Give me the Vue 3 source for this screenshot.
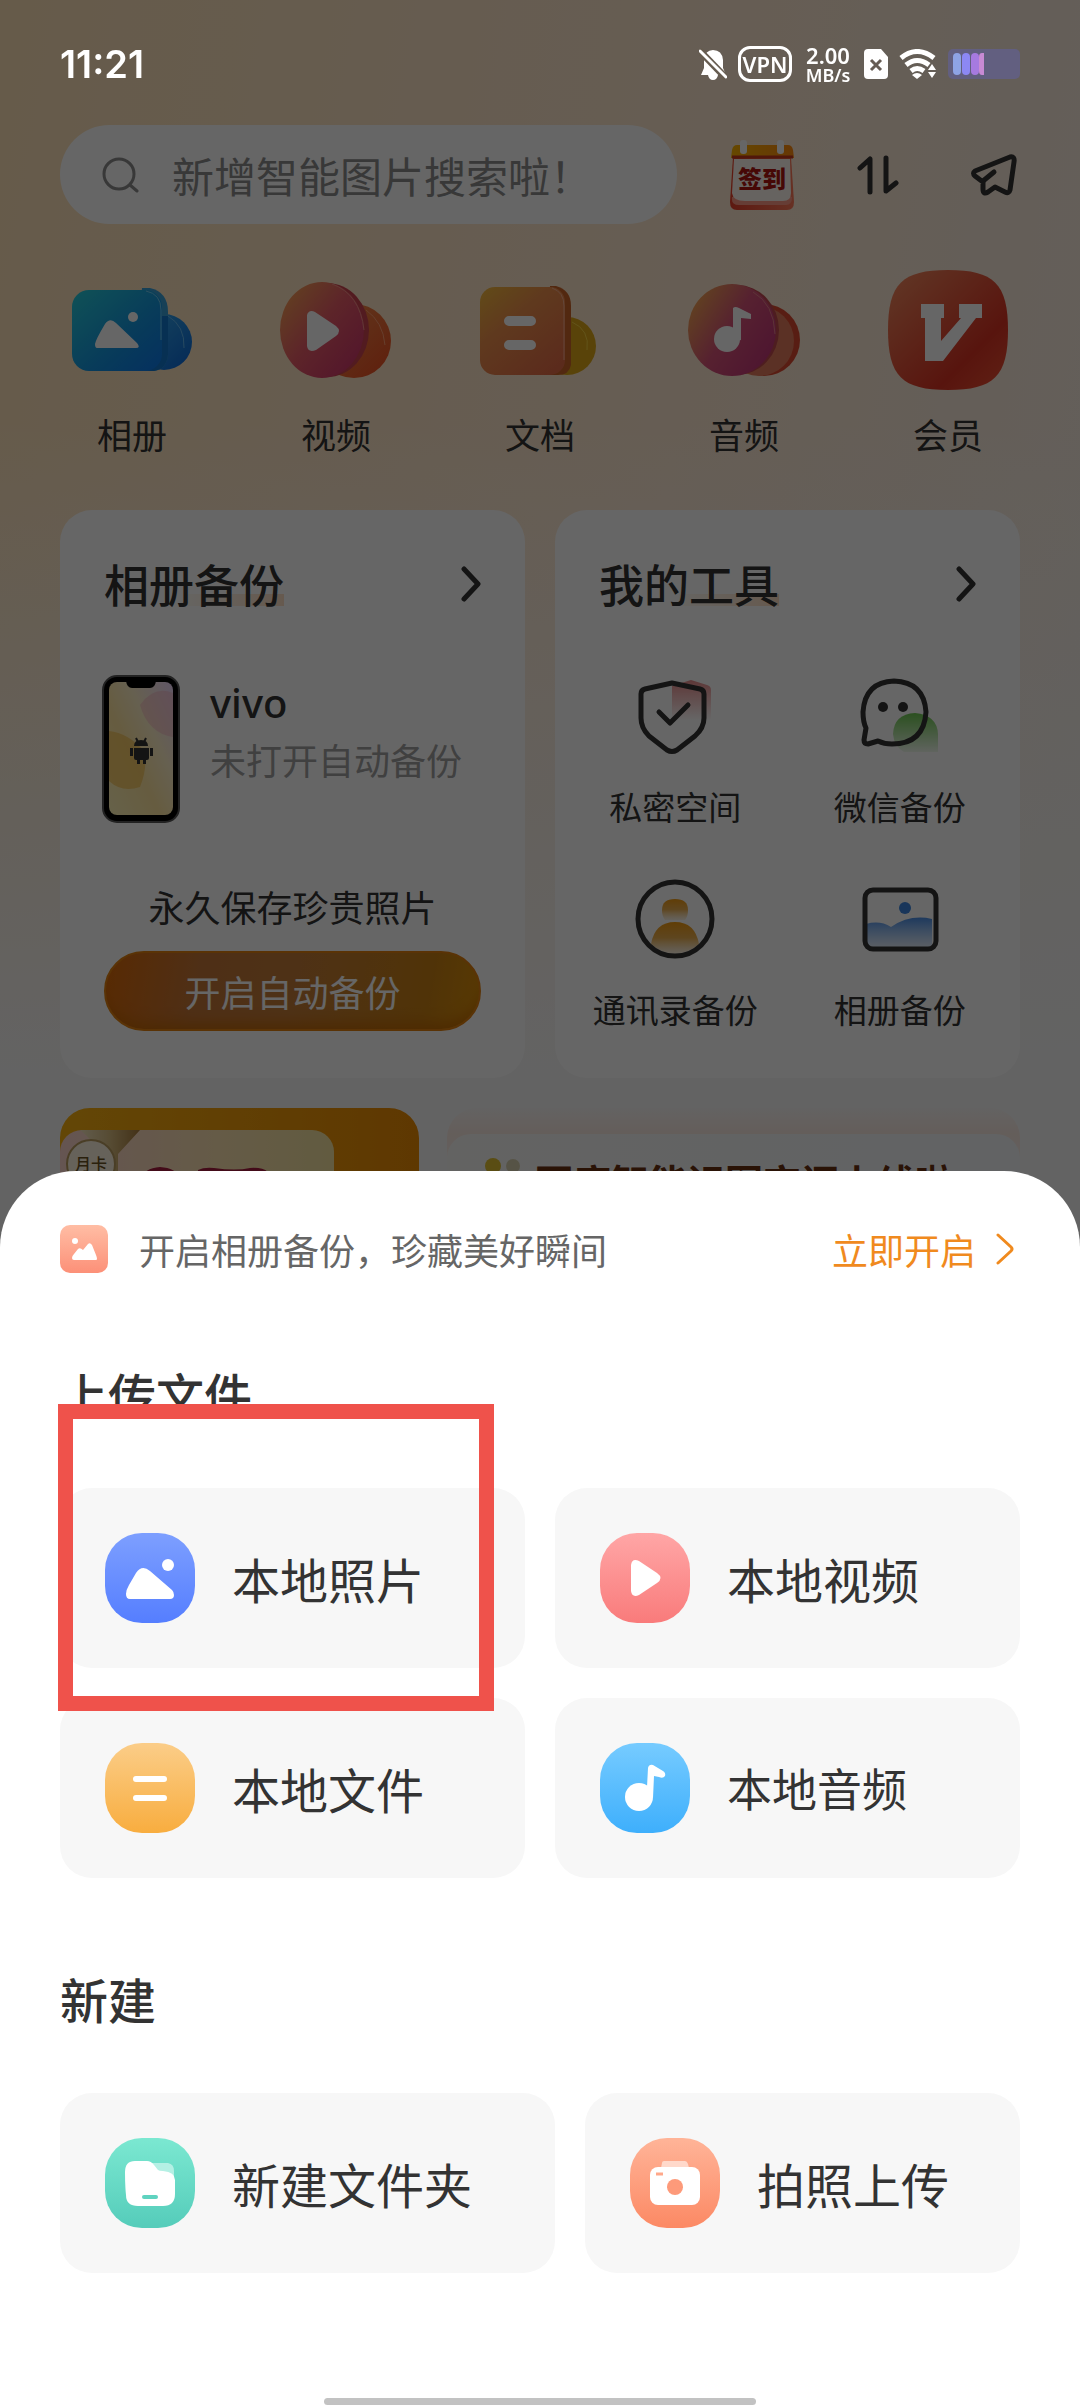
<script setup>
import { ref } from 'vue'

const keyword = ref('')

const categories = [
  { icon: 'album', label: '相册' },
  { icon: 'video', label: '视频' },
  { icon: 'doc', label: '文档' },
  { icon: 'audio', label: '音频' },
  { icon: 'vip', label: '会员' },
]

const tools = [
  { icon: 'shield', label: '私密空间' },
  { icon: 'chat', label: '微信备份' },
  { icon: 'contact', label: '通讯录备份' },
  { icon: 'picture', label: '相册备份' },
]

const uploads = [
  { icon: 'photo', label: '本地照片', from: '#7d9fff', to: '#557eff', marked: true },
  { icon: 'play', label: '本地视频', from: '#ffa6a6', to: '#f97b7b' },
  { icon: 'file', label: '本地文件', from: '#fbcd88', to: '#f8ad3f' },
  { icon: 'note', label: '本地音频', from: '#76cbff', to: '#3eaffc', compact: true },
]

const creations = [
  { icon: 'folder', label: '新建文件夹', from: '#7be8d1', to: '#55ccba' },
  { icon: 'camera', label: '拍照上传', from: '#ffb498', to: '#fc8964' },
]
</script>

<template>
  <div class="screen">
    <main class="home">
      <div class="topbar">
        <label class="search">
          <svg width="38" height="36" viewBox="0 0 38 36" fill="none" stroke="#8c8c8c" stroke-width="3" stroke-linecap="round">
            <circle cx="17" cy="17" r="15" />
            <path d="M28 28 L35 34" />
          </svg>
          <input v-model="keyword" type="text" aria-label="搜索" placeholder="新增智能图片搜索啦！" />
        </label>
        <div class="actions">
          <button type="button" class="action checkin">
            <svg width="66" height="72" viewBox="0 0 66 72" aria-hidden="true">
              <defs>
                <linearGradient id="calTop" x1="0" x2="1"><stop offset="0" stop-color="#ffb400" /><stop offset="1" stop-color="#ff8a10" /></linearGradient>
                <linearGradient id="calBody" x1="0" x2="1"><stop offset="0" stop-color="#e8402a" /><stop offset="1" stop-color="#ff7a5a" /></linearGradient>
              </defs>
              <path d="M4 18 H62 L65 63 Q65 71 58 71 H8 Q1 71 1 63 Z" fill="url(#calBody)" />
              <path d="M3 58 Q2 66 10 66 H57 Q63 66 63 58 Z" fill="#ff9a86" />
              <path d="M5 20 H61 L62 54 Q62 62 54 62 H16 Q4 62 3 54 Z" fill="#fff8f0" />
              <path d="M8 6 H59 Q63 6 64 11 L65 19 H2 L3 11 Q4 6 8 6 Z" fill="url(#calTop)" />
              <path d="M3 18 H64" stroke="#c83a1c" stroke-width="3" />
              <rect x="11" y="1" width="7" height="14" rx="3" fill="#fff" />
              <rect x="48" y="1" width="7" height="14" rx="3" fill="#fff" />
            </svg>
            <span class="checkin-text">签到</span>
          </button>
          <button type="button" class="action" aria-label="传输列表">
            <svg width="42" height="40" viewBox="0 0 42 40" fill="none" stroke="#333" stroke-width="5" stroke-linecap="round" stroke-linejoin="round">
              <path d="M3 13 L13 4 V37" />
              <path d="M29 3 V36 L39 28" />
            </svg>
          </button>
          <button type="button" class="action" aria-label="分享">
            <svg width="46" height="42" viewBox="0 0 46 42" fill="none" stroke="#333" stroke-width="5" stroke-linecap="round" stroke-linejoin="round">
              <path d="M4 17 L39 3 Q44 2 43 8 L39 36 Q38 40 34 38 L24 33 L17 38 Q12 41 12 35 V28 L4 22 Q1 19 4 17 Z" />
              <path d="M12 27 L23 18" />
            </svg>
          </button>
        </div>
      </div>

      <nav class="categories">
        <a v-for="c in categories" :key="c.icon" href="#" class="category">
          <svg v-if="c.icon === 'album'" width="120" height="120" viewBox="0 0 120 120">
            <defs>
              <linearGradient id="alb" x1="0" y1="0" x2="1" y2="1"><stop offset="0" stop-color="#28ccd8" /><stop offset="0.6" stop-color="#1494e0" /><stop offset="1" stop-color="#0c78ee" /></linearGradient>
              <linearGradient id="alb2" x1="0" y1="0" x2="1" y2="1"><stop offset="0" stop-color="#3bb0ec" /><stop offset="1" stop-color="#0a66d8" /></linearGradient>
            </defs>
            <circle cx="92" cy="72" r="28" fill="url(#alb2)" />
            <path d="M96 46 Q113 56 112 78" fill="none" stroke="#62b8f0" stroke-width="1" />
            <path d="M70 18 H78 Q96 22 96 42 V84 Q95 99 82 101 H64 Z" fill="#3aa0d8" />
            <path d="M90 46 H96 V84 Q95 99 82 101 H70 Z" fill="#1278d0" />
            <rect x="0" y="20" width="90" height="81" rx="17" fill="url(#alb)" />
            <path d="M74 21 Q89 24 89 40 V70" fill="none" stroke="#70c8f0" stroke-width="1" />
            <path d="M23 74 Q24 69 33 54 Q38 47 44 53 L65 73 Q69 78 64 78 H25 Q23 78 23 74 Z" fill="#fff" />
            <circle cx="61" cy="47" r="5" fill="#fff" />
          </svg>
          <svg v-else-if="c.icon === 'video'" width="120" height="120" viewBox="0 0 120 120">
            <defs>
              <linearGradient id="vid" x1="0" y1="0.1" x2="0.9" y2="0.9"><stop offset="0" stop-color="#f8a452" /><stop offset="0.5" stop-color="#e85c68" /><stop offset="1" stop-color="#d0386c" /></linearGradient>
              <linearGradient id="vid2" x1="0" y1="0" x2="1" y2="1"><stop offset="0" stop-color="#f09450" /><stop offset="1" stop-color="#ee4c20" /></linearGradient>
            </defs>
            <circle cx="78" cy="71" r="37" fill="url(#vid2)" />
            <path d="M90 40 Q107 52 109 75" fill="none" stroke="#ff9c70" stroke-width="1" />
            <ellipse cx="51" cy="60" rx="42" ry="47" fill="#cc4450" />
            <ellipse cx="46" cy="60" rx="42" ry="48" fill="url(#vid)" />
            <path d="M56 14 Q84 24 88 60" fill="none" stroke="#f58c84" stroke-width="1" />
            <path d="M31 45 Q33 39 39 42 L60 56 Q66 61 60 66 L40 80 Q32 83 31 76 Z" fill="#fff" />
          </svg>
          <svg v-else-if="c.icon === 'doc'" width="120" height="120" viewBox="0 0 120 120">
            <defs>
              <linearGradient id="doc" x1="0" y1="0" x2="0.8" y2="1"><stop offset="0" stop-color="#f5bc3c" /><stop offset="0.4" stop-color="#ee904c" /><stop offset="1" stop-color="#e46c48" /></linearGradient>
            </defs>
            <circle cx="87" cy="76" r="29" fill="#dea818" />
            <path d="M92 52 Q110 60 107 80" fill="none" stroke="#f5d040" stroke-width="1" />
            <path d="M70 16 H76 Q91 20 91 36 V95 Q89 105 78 105 H66 Z" fill="#cc6428" />
            <rect x="0" y="17" width="85" height="88" rx="15" fill="url(#doc)" />
            <path d="M72 18 Q84 22 84 36 V90" fill="none" stroke="#f8b090" stroke-width="1" />
            <path d="M29 51 H51 M29 75 H51" stroke="#fff" stroke-width="10" stroke-linecap="round" />
          </svg>
          <svg v-else-if="c.icon === 'audio'" width="120" height="120" viewBox="0 0 120 120">
            <defs>
              <linearGradient id="aud" x1="0" y1="0.2" x2="0.9" y2="0.8"><stop offset="0" stop-color="#f5a850" /><stop offset="0.5" stop-color="#d85478" /><stop offset="1" stop-color="#c43878" /></linearGradient>
            </defs>
            <circle cx="80" cy="70" r="36" fill="#dc4a30" />
            <circle cx="75" cy="71" r="35" fill="#e47c5c" />
            <ellipse cx="53" cy="60" rx="42" ry="45" fill="#c24a50" />
            <ellipse cx="48" cy="60" rx="44" ry="46" fill="url(#aud)" />
            <path d="M69 22 Q90 34 91 64" fill="none" stroke="#e88088" stroke-width="1" />
            <circle cx="43" cy="69" r="13" fill="#fff" />
            <path d="M49 72 V38 Q51 36 55 38 L67 44 V49 L57 48 V70 Z" fill="#fff" />
          </svg>
          <svg v-else width="120" height="120" viewBox="0 0 120 120">
            <defs>
              <linearGradient id="vip" x1="0" y1="0" x2="1" y2="1"><stop offset="0.1" stop-color="#f08058" /><stop offset="0.7" stop-color="#dc3424" /><stop offset="1" stop-color="#f05434" /></linearGradient>
            </defs>
            <path d="M60 0 C106 0 120 14 120 60 C120 106 106 120 60 120 C14 120 0 106 0 60 C0 14 14 0 60 0 Z" fill="url(#vip)" />
            <path d="M33 34 H56 V48 H53 V71 L73 48 H71 V34 H94 V48 H88 L55 91 H37 V48 H33 Z" fill="#fff" />
          </svg>
          <span>{{ c.label }}</span>
        </a>
      </nav>

      <div class="cards">
        <section class="card backup">
          <a href="#" class="card-head">
            <h2>相册备份</h2>
            <svg width="20" height="36" viewBox="0 0 20 36" fill="none" stroke="#333" stroke-width="5" stroke-linecap="round" stroke-linejoin="round"><path d="M3 3 L17 18 L3 33" /></svg>
          </a>
          <div class="device">
            <svg width="78" height="148" viewBox="0 0 78 148">
              <defs>
                <linearGradient id="wall" x1="1" y1="0" x2="0" y2="1"><stop offset="0" stop-color="#f0d8ff" /><stop offset="0.35" stop-color="#fff0c8" /><stop offset="0.6" stop-color="#ffe6a0" /><stop offset="1" stop-color="#fff4b8" /></linearGradient>
              </defs>
              <rect x="1" y="1" width="76" height="146" rx="14" fill="#000" stroke="#555" stroke-width="2" />
              <rect x="7" y="7" width="64" height="133" rx="8" fill="url(#wall)" />
              <path d="M7 56 Q26 58 42 76 Q46 92 38 112 Q20 118 7 106 Z" fill="#f3bd4c" opacity="0.65" />
              <path d="M38 30 Q52 10 71 18 V62 Q46 58 38 30 Z" fill="#f4b4c0" opacity="0.5" />
              <path d="M24 6 H54 Q53 13 48 13 H30 Q25 13 24 6 Z" fill="#000" />
              <path d="M34 63 L36 67 M44 63 L42 67" stroke="#333" stroke-width="2" />
              <path d="M32 71 Q32 65 39 65 Q46 65 46 71 Z M32 73 H47 V83 Q47 85 45 85 H34 Q32 85 32 83 Z M28 73 H31 V81 H28 Z M48 73 H51 V81 H48 Z M35 84 H38 V89 H35 Z M41 84 H44 V89 H41 Z" fill="#333" />
            </svg>
            <div class="device-info">
              <p class="device-name">vivo</p>
              <p class="device-state">未打开自动备份</p>
            </div>
          </div>
          <p class="slogan">永久保存珍贵照片</p>
          <button type="button" class="enable">开启自动备份</button>
        </section>

        <section class="card toolbox">
          <a href="#" class="card-head">
            <h2>我的工具</h2>
            <svg width="20" height="36" viewBox="0 0 20 36" fill="none" stroke="#333" stroke-width="5" stroke-linecap="round" stroke-linejoin="round"><path d="M3 3 L17 18 L3 33" /></svg>
          </a>
          <div class="tools">
            <a v-for="t in tools" :key="t.icon" href="#" class="tool">
              <svg v-if="t.icon === 'shield'" width="80" height="80" viewBox="0 0 80 80" fill="none" stroke="#333" stroke-width="5" stroke-linecap="round" stroke-linejoin="round">
                <defs><linearGradient id="shd" x1="0" y1="0" x2="0" y2="1"><stop offset="0" stop-color="#e88c8c" /><stop offset="1" stop-color="#f08c8c" stop-opacity="0" /></linearGradient></defs>
                <path d="M37 10 L56 4 L72 9 Q76 10 76 14 V44 H37 Z" fill="url(#shd)" stroke="none" />
                <path d="M37 7 L65 13 Q69 14 69 18 V42 Q69 52 60 60 L42 74 Q37 77 32 74 L14 60 Q6 52 6 42 V18 Q6 14 10 13 Z" />
                <path d="M24 36 L35 47 L53 29" />
              </svg>
              <svg v-else-if="t.icon === 'chat'" width="80" height="80" viewBox="2 0 80 80" fill="none" stroke="#333" stroke-width="5" stroke-linecap="round" stroke-linejoin="round">
                <defs><linearGradient id="cht" x1="0" y1="0" x2="0" y2="1"><stop offset="0" stop-color="#6cc850" /><stop offset="1" stop-color="#6cc850" stop-opacity="0.1" /></linearGradient></defs>
                <path d="M35 58 Q36 38 57 37 Q79 39 80 58 V76 H46 Q36 70 35 58 Z" fill="url(#cht)" stroke="none" />
                <path d="M36 5 Q66 6 68 36 Q66 68 34 68 Q26 68 20 65 L10 68 Q6 68 6 64 L8 52 Q5 46 5 36 Q7 6 36 5 Z" />
                <g fill="#333" stroke="none"><circle cx="25" cy="31" r="5" /><circle cx="45" cy="31" r="5" /></g>
              </svg>
              <svg v-else-if="t.icon === 'contact'" width="80" height="80" viewBox="0 0 80 80" fill="none">
                <defs><linearGradient id="ctc" x1="0" y1="0" x2="0" y2="1"><stop offset="0" stop-color="#f09a10" /><stop offset="0.5" stop-color="#e8a030" stop-opacity="0.85" /><stop offset="1" stop-color="#f5c77b" stop-opacity="0.2" /></linearGradient></defs>
                <path d="M27 31 Q27 20 40 20 Q53 20 53 31 Q53 37 50 41 H30 Q27 37 27 31 Z" fill="url(#ctc)" />
                <path d="M16 65 Q20 43 40 43 Q60 43 64 65 Q54 74 40 75 Q26 74 16 65 Z" fill="url(#ctc)" />
                <circle cx="40" cy="40" r="37" stroke="#333" stroke-width="5" />
              </svg>
              <svg v-else width="80" height="80" viewBox="0 0 80 80" fill="none">
                <defs><linearGradient id="pct" x1="0" y1="0" x2="0" y2="1"><stop offset="0" stop-color="#4a8fe8" /><stop offset="1" stop-color="#7fb0f0" stop-opacity="0.2" /></linearGradient></defs>
                <path d="M6 45 Q20 41 31 48 Q50 35 72 40 V69 H6 Z" fill="url(#pct)" />
                <circle cx="45" cy="29" r="6" fill="#3c86e0" />
                <rect x="5" y="11" width="71" height="59" rx="8" stroke="#333" stroke-width="5" />
              </svg>
              <span>{{ t.label }}</span>
            </a>
          </div>
        </section>
      </div>

      <div class="banners">
        <div class="promo">
          <div class="promo-card">
            <span class="stamp">月卡</span>
            <svg class="ribbon" width="80" height="42" viewBox="0 0 80 42">
              <defs><linearGradient id="rib" x1="0" x2="1"><stop offset="0" stop-color="#f4e6c0" /><stop offset="0.5" stop-color="#d8bc80" /><stop offset="1" stop-color="#a87c3c" /></linearGradient></defs>
              <path d="M20 0 H80 L58 24 V42 H34 Q46 20 20 0 Z" fill="url(#rib)" />
            </svg>
            <svg width="130" height="60" viewBox="0 0 130 60">
              <path d="M0 14 Q4 2 20 1 Q36 2 40 12 V40 H0 Z M58 4 Q64 1 74 2 Q96 5 110 2 Q122 1 128 6 V40 H58 Z" fill="#a81c40" />
            </svg>
          </div>
        </div>
        <div class="news">
          <div class="news-body">
            <svg width="40" height="30" viewBox="0 0 40 30"><circle cx="10" cy="12" r="8" fill="#e0c030" /><circle cx="30" cy="12" r="7" fill="#d8d0b0" /></svg>
            <span>百度智能识图空间上线啦</span>
          </div>
        </div>
      </div>
    </main>

    <div class="mask"></div>

    <header class="status">
      <time>11:21</time>
      <div class="indicators">
        <svg width="28" height="32" viewBox="0 0 28 32">
          <path d="M14 2 Q23 2 24 12 V20 L27 27 H2 L5 20 V12 Q6 2 14 2 Z M9 27 H19 Q18 32 14 32 Q10 32 9 27 Z" fill="#fff" />
          <path d="M0 2 L27 30" stroke="#665c50" stroke-width="7" />
          <path d="M1 3 L27 29" stroke="#fff" stroke-width="3" stroke-linecap="round" />
        </svg>
        <span class="vpn">VPN</span>
        <span class="speed"><b>2.00</b><small>MB/s</small></span>
        <svg width="24" height="30" viewBox="0 0 24 30">
          <path d="M4 0 H17 L24 8 V26 Q24 30 20 30 H4 Q0 30 0 26 V4 Q0 0 4 0 Z" fill="#fff" />
          <path d="M7 11 L17 21 M17 11 L7 21" stroke="#665c54" stroke-width="3" />
        </svg>
        <svg width="38" height="30" viewBox="0 0 38 30" fill="none" stroke="#fff" stroke-width="5">
          <path d="M2 9 Q18 -4 35 9" />
          <path d="M7 16 Q18 7 30 16" />
          <path d="M12 22 Q18 17 25 22" />
          <path d="M13 26 Q18 22 23 26 L18 30 Z M33 15 L37 21 H29 Z M33 29 L37 23 H29 Z" fill="#fff" stroke="none" />
        </svg>
        <svg width="72" height="30" viewBox="0 0 72 30">
          <rect width="72" height="30" rx="5" fill="#625f80" />
          <rect x="5" y="4" width="8" height="22" rx="4" fill="#8ea3e4" />
          <rect x="14" y="4" width="8" height="22" rx="4" fill="#8c88f4" />
          <rect x="23" y="4" width="8" height="22" rx="4" fill="#a67ae0" />
          <path d="M34 4 H36 V26 H34 Q31 26 31 22 V8 Q31 4 34 4 Z" fill="#c88ad4" />
        </svg>
      </div>
    </header>

    <section class="sheet" role="dialog" aria-label="上传">
      <a href="#" class="prompt">
        <svg width="48" height="48" viewBox="0 0 48 48">
          <defs><linearGradient id="prm" x1="0" y1="0" x2="0" y2="1"><stop offset="0" stop-color="#ffbda4" /><stop offset="1" stop-color="#fc9078" /></linearGradient></defs>
          <rect width="48" height="48" rx="10" fill="url(#prm)" />
          <circle cx="15" cy="16" r="3" fill="#fff" />
          <path d="M12 33 Q12 31 14 29 L18 24 Q20 22 23 25 L28 19 Q30 17 32 20 L36 30 Q38 35 36 35 H14 Q12 35 12 33 Z" fill="#fff" />
        </svg>
        <span class="prompt-text">开启相册备份，珍藏美好瞬间</span>
        <span class="prompt-go">立即开启</span>
        <svg width="24" height="32" viewBox="0 0 24 32" fill="none" stroke="#f08a1e" stroke-width="3" stroke-linecap="round" stroke-linejoin="round"><path d="M2 2 L15 14 Q17 16 15 18 L2 30" /></svg>
      </a>

      <h3>上传文件</h3>
      <div class="tiles even">
        <button v-for="u in uploads" :key="u.icon" type="button" class="tile" :class="{ compact: u.compact }">
          <svg width="90" height="90" viewBox="0 0 90 90">
            <defs>
              <linearGradient :id="`tile-${u.icon}`" x1="0" y1="0" x2="0" y2="1">
                <stop offset="0" :stop-color="u.from" />
                <stop offset="1" :stop-color="u.to" />
              </linearGradient>
            </defs>
            <rect width="90" height="90" rx="37" :fill="`url(#tile-${u.icon})`" />
            <g v-if="u.icon === 'photo'" fill="#fff">
              <path d="M21 61 Q21 57 24 52 L31 40 Q37 31 45 38 L67 57 Q69 59 69 62 Q69 66 65 66 H25 Q21 66 21 61 Z" />
              <circle cx="63" cy="32" r="6" />
            </g>
            <path v-else-if="u.icon === 'play'" d="M31 32 Q32 25 39 28 L57 40 Q64 45 57 50 L39 62 Q32 65 31 58 Z" fill="#fff" />
            <path v-else-if="u.icon === 'file'" d="M31 36 H59 M31 55 H59" stroke="#fff" stroke-width="6" stroke-linecap="round" />
            <g v-else fill="#fff">
              <circle cx="39" cy="54" r="14" />
              <path d="M47 44 L48 25 Q49 21 53 22 L63 28 Q66 30 65 33 Q63 36 59 34 L54 33 L53 55 Z" />
            </g>
          </svg>
          <span>{{ u.label }}</span>
          <i v-if="u.marked" class="marker"></i>
        </button>
      </div>

      <h3>新建</h3>
      <div class="tiles wide">
        <button v-for="n in creations" :key="n.icon" type="button" class="tile">
          <svg width="90" height="90" viewBox="0 0 90 90">
            <defs>
              <linearGradient :id="`tile-${n.icon}`" x1="0" y1="0" x2="0" y2="1">
                <stop offset="0" :stop-color="n.from" />
                <stop offset="1" :stop-color="n.to" />
              </linearGradient>
            </defs>
            <rect width="90" height="90" rx="37" :fill="`url(#tile-${n.icon})`" />
            <g v-if="n.icon === 'folder'">
              <path d="M46 25 H63 Q69 26 69 33 V40 H50 Z" fill="#b5f0e4" />
              <path d="M30 23 H42 Q46 23 49 27 L53 32 Q54 33 58 33 Q70 34 70 42 V56 Q70 68 58 68 H33 Q21 68 21 57 Q20 48 20 34 Q20 23 30 23 Z" fill="#fff" />
              <path d="M39 59 H51" stroke="#5fd3c0" stroke-width="4" stroke-linecap="round" />
            </g>
            <g v-else>
              <path d="M34 23 H55 Q57 23 58 26 L59 30 H31 L32 25 Q32 23 34 23 Z" fill="#ffd9cb" />
              <rect x="20" y="29" width="50" height="38" rx="8" fill="#fff" />
              <circle cx="45" cy="49" r="8" fill="#fd9a7a" />
              <path d="M26 36 H33" stroke="#ffa88a" stroke-width="3" />
            </g>
          </svg>
          <span>{{ n.label }}</span>
        </button>
      </div>
      <div class="home-bar"></div>
    </section>
  </div>
</template>

<style>
html,
body {
  margin: 0;
  background: #646464;
}
</style>

<style scoped>
.screen {
  position: relative;
  min-height: 100vh;
  overflow: hidden;
  font-family: "Noto Sans CJK SC", "Noto Sans", sans-serif;
  color: #333;
}
.screen * {
  box-sizing: border-box;
}
h2,
h3,
p {
  margin: 0;
}
a {
  color: inherit;
  text-decoration: none;
}
button {
  border: 0;
  padding: 0;
  background: none;
  font: inherit;
  color: inherit;
}
svg {
  flex: none;
  display: block;
}

.home {
  isolation: isolate;
  min-height: 100vh;
  padding-top: 125px;
  background:
    linear-gradient(180deg, rgba(248, 248, 248, 0) 420px, #f8f8f8 1080px),
    linear-gradient(100deg, #ffe3b9 0%, #ffe9d2 50%, #f3f0ec 100%);
}
.mask {
  position: fixed;
  inset: 0;
  background: rgba(0, 0, 0, 0.6);
}

.status {
  position: absolute;
  top: 0;
  left: 0;
  right: 0;
  display: flex;
  justify-content: space-between;
  align-items: center;
  height: 128px;
  padding: 0 60px;
  color: #fff;
}
.status time {
  font: 600 38px/48px Inter, sans-serif;
}
.indicators {
  display: flex;
  align-items: center;
  gap: 11px;
}
.vpn {
  width: 54px;
  border: 3px solid #fff;
  border-radius: 12px;
  font: 600 22px/30px "Noto Sans", sans-serif;
  text-align: center;
}
.speed {
  display: flex;
  flex-direction: column;
  align-items: center;
  width: 50px;
  font-family: "Noto Sans", sans-serif;
}
.speed b {
  font-size: 22px;
  line-height: 22px;
  font-weight: 600;
}
.speed small {
  font-size: 18px;
  line-height: 18px;
  font-weight: 600;
}

.topbar {
  display: flex;
  align-items: center;
  gap: 52px;
  height: 99px;
  padding: 0 53px 0 60px;
}
.search {
  flex: 1;
  min-width: 0;
  display: flex;
  align-items: center;
  gap: 32px;
  height: 99px;
  padding: 0 24px 0 42px;
  border-radius: 50px;
  background: #fff;
}
.search input {
  flex: 1;
  min-width: 0;
  padding: 0;
  border: 0;
  outline: 0;
  background: none;
  font: 400 42px/60px "Noto Sans CJK SC", sans-serif;
  color: #333;
}
.search input::placeholder {
  color: #8c8c8c;
  opacity: 1;
}
.actions {
  display: flex;
  gap: 50px;
}
.action {
  position: relative;
  display: flex;
  align-items: center;
  justify-content: center;
  width: 66px;
  height: 72px;
}
.checkin-text {
  position: absolute;
  top: 24px;
  left: 0;
  right: 0;
  font-size: 24px;
  line-height: 30px;
  font-weight: 900;
  color: #b01410;
}

.categories {
  display: flex;
  padding: 46px 30px 0;
}
.category {
  flex: 1;
  display: flex;
  flex-direction: column;
  align-items: center;
  gap: 20px;
  font-size: 35px;
  line-height: 48px;
}

.cards {
  display: grid;
  grid-template-columns: 1fr 1fr;
  gap: 30px;
  padding: 52px 60px 0;
}
.card {
  padding: 44px 0 0;
  height: 568px;
  border-radius: 32px;
  background: #fff;
}
.card-head {
  display: flex;
  justify-content: space-between;
  align-items: center;
  height: 60px;
  margin: 0 44px;
}
.card-head h2 {
  font-size: 45px;
  line-height: 60px;
  font-weight: 500;
  background: linear-gradient(90deg, rgba(255, 236, 200, 0.2), #ffdfc4) no-repeat;
  background-size: 100px 12px;
  background-position: right bottom 8px;
}
.backup {
  display: flex;
  flex-direction: column;
}
.device {
  display: flex;
  gap: 30px;
  margin: 61px 42px 0;
}
.device-info {
  line-height: 56px;
}
.device-name {
  font-family: "Noto Sans", sans-serif;
  font-size: 40px;
  font-weight: 500;
}
.device-state {
  font-size: 36px;
  color: #a0a0a0;
}
.slogan {
  margin-top: 59px;
  font-size: 36px;
  line-height: 48px;
  text-align: center;
}
.enable {
  height: 80px;
  margin: 21px 44px 0;
  border-radius: 40px;
  border: 2px solid #e08010;
  background: linear-gradient(100deg, #dc6a08 0%, #c47638 25%, #c47c38 50%, #c88014 85%, #dc9008 100%);
  box-shadow: inset 0 -14px 14px -8px rgba(190, 100, 0, 0.8);
  font-size: 36px;
  line-height: 48px;
  color: #fff;
}
.tools {
  display: grid;
  grid-template-columns: 1fr 1fr;
  row-gap: 49px;
  margin: 62px 8px 0;
}
.tool {
  display: flex;
  flex-direction: column;
  align-items: center;
  gap: 26px;
  font-size: 33px;
  line-height: 48px;
}

.banners {
  display: flex;
  gap: 28px;
  padding: 30px 60px 0;
}
.promo {
  width: 359px;
  height: 240px;
  padding-top: 22px;
  border-radius: 30px;
  background: linear-gradient(90deg, #f8b010, #ec8c04);
  overflow: hidden;
}
.promo-card {
  position: relative;
  display: flex;
  justify-content: center;
  width: 274px;
  height: 200px;
  padding: 36px 0 0 16px;
  border-radius: 22px;
  background: linear-gradient(90deg, #fcd4cc, #fce4b0 60%, #f4e4a0);
}
.ribbon {
  position: absolute;
  top: 0;
  left: 0;
}
.stamp {
  position: absolute;
  z-index: 1;
  top: 9px;
  left: 6px;
  width: 50px;
  height: 50px;
  border: 2px solid #b89c60;
  border-radius: 50%;
  background: #fff4e0;
  font-size: 16px;
  line-height: 44px;
  font-weight: 500;
  text-align: center;
  color: #6a5222;
}
.news {
  flex: 1;
  padding-top: 26px;
  border-radius: 30px;
  background: linear-gradient(180deg, #f8f6f5, #fbeae2 26px, #fbf4f2 80px);
}
.news-body {
  display: flex;
  align-items: flex-start;
  gap: 12px;
  height: 200px;
  padding: 20px 0 0 36px;
  border-radius: 24px;
  background: linear-gradient(90deg, #f8f8f6, #f4f8fa);
}
.news-body span {
  font-size: 38px;
  line-height: 54px;
  font-weight: 700;
  color: #6a3010;
  white-space: nowrap;
}

.sheet {
  position: fixed;
  left: 0;
  right: 0;
  bottom: 0;
  padding: 54px 60px 3px;
  border-radius: 76px 76px 0 0;
  background: #fff;
}
.prompt {
  display: flex;
  align-items: center;
  height: 48px;
  font-size: 36px;
  line-height: 48px;
}
.prompt-text {
  flex: 1;
  margin-left: 31px;
  color: #666;
}
.prompt-go {
  margin-right: 20px;
  color: #f08a1e;
}
.sheet h3 {
  margin: 90px 0 65px;
  font-size: 48px;
  line-height: 60px;
  font-weight: 500;
}
.tiles {
  display: grid;
  gap: 30px;
}
.tiles.even {
  grid-template-columns: 1fr 1fr;
}
.tiles.wide {
  grid-template-columns: 33fr 29fr;
}
.tile {
  position: relative;
  display: flex;
  align-items: center;
  gap: 37px;
  height: 180px;
  padding: 0 45px;
  border-radius: 32px;
  background: #f7f7f7;
  font-size: 48px;
  line-height: 60px;
  white-space: nowrap;
}
.tile.compact {
  font-size: 45px;
}
.marker {
  position: absolute;
  z-index: 1;
  top: -84px;
  bottom: -43px;
  left: -2px;
  right: 31px;
  border: 15px solid #ef524b;
}
.home-bar {
  width: 45%;
  height: 7px;
  margin: 125px auto 0;
  border-radius: 4px;
  background: #c2c2c2;
}
</style>
